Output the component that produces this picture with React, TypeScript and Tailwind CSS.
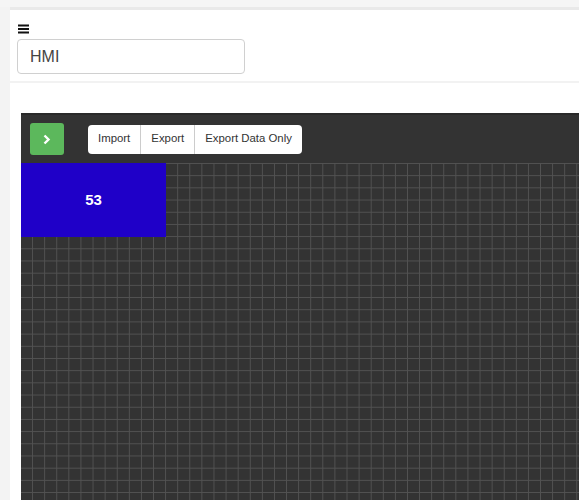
import React from "react";

const gridBg =
  "bg-[#333333] bg-[image:linear-gradient(to_right,#525252_1px,transparent_1px),linear-gradient(to_bottom,#525252_1px,transparent_1px)] bg-[size:12.1px_12.2px] bg-[position:-1px_0px]";

const ToolbarButton: React.FC<{ label: string; last?: boolean }> = ({ label, last }) => (
  <button
    type="button"
    className={`h-full px-[10px] text-[11.4px] text-[#333] ${last ? "" : "border-r border-[#cccccc]"}`}
  >
    {label}
  </button>
);

const App: React.FC = () => {
  return (
    <div
      className="w-[579px] h-[500px] overflow-hidden bg-[#f3f3f3] flex flex-col"
      style={{ fontFamily: '"Liberation Sans", Arial, sans-serif' }}
    >
      <div className="h-[7px] shrink-0 bg-[#f5f5f5]" />
      <div className="h-[3px] shrink-0 ml-[10px] bg-[#e9e9e9]" />
      <div className="flex-1 ml-[10px] bg-white flex flex-col">
        {/* header */}
        <div className="pl-[7px] pt-[14px] pb-[7px] border-b-2 border-[#f2f2f2]">
          <svg width="12" height="10" viewBox="0 0 12 10" className="ml-px block">
            <rect x="0" y="0.5" width="11" height="2" fill="#111" />
            <rect x="0" y="4" width="11" height="2" fill="#111" />
            <rect x="0" y="7.5" width="11" height="2" fill="#111" />
          </svg>
          <div className="mt-[5px] w-[228px] h-[35px] border border-[#d0d0d0] rounded-[4px] flex items-center pl-[12px] text-[16px] text-[#444]">
            HMI
          </div>
        </div>

        {/* editor */}
        <div className="flex-1 pt-[30px] pl-[11px]">
          <div className="h-full border-t-2 border-[#2a2a2a] bg-[#333333] flex flex-col">
            <div className="h-[48px] shrink-0 flex items-center pl-[9px] gap-[24px]">
              <button
                type="button"
                className="w-[34px] h-[32px] rounded-[3px] bg-[#5cb85c] flex items-center justify-center"
              >
                <svg width="8" height="11" viewBox="0 0 8 11">
                  <path d="M1.5 1.5 L5.5 5.5 L1.5 9.5" stroke="#fff" strokeWidth="2.4" fill="none" />
                </svg>
              </button>
              <div className="h-[29px] bg-white rounded-[4px] flex items-center">
                <ToolbarButton label="Import" />
                <ToolbarButton label="Export" />
                <ToolbarButton label="Export Data Only" last />
              </div>
            </div>
            <div className={`flex-1 ${gridBg}`}>
              <div className="w-[145px] h-[74px] bg-[#1f00c8] flex items-center justify-center text-white font-bold text-[15px]">
                53
              </div>
            </div>
          </div>
        </div>
      </div>
    </div>
  );
};

export default App;
